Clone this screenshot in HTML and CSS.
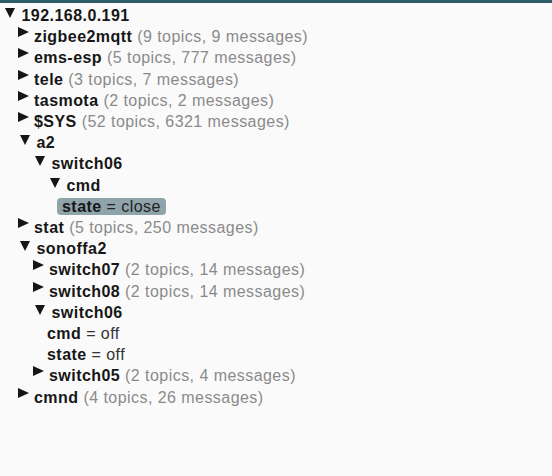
FILE: index.html
```html
<!DOCTYPE html>
<html lang="en">
<head>
  <meta charset="UTF-8">
  <title>MQTT Explorer</title>
  <link rel="stylesheet" href="styles.css">
</head>
<body>
  <div class="topbar"></div>

  <div class="tree">
    <div class="node open">
      <div class="row"><span class="tog"></span><b>192.168.0.191</b></div>
      <div class="kids">
        <div class="row"><span class="tog"></span><b>zigbee2mqtt</b> <span class="count">(9 topics, 9 messages)</span></div>
        <div class="row"><span class="tog"></span><b>ems-esp</b> <span class="count">(5 topics, 777 messages)</span></div>
        <div class="row"><span class="tog"></span><b>tele</b> <span class="count">(3 topics, 7 messages)</span></div>
        <div class="row"><span class="tog"></span><b>tasmota</b> <span class="count">(2 topics, 2 messages)</span></div>
        <div class="row"><span class="tog"></span><b>$SYS</b> <span class="count">(52 topics, 6321 messages)</span></div>

        <div class="node open">
          <div class="row"><span class="tog"></span><b>a2</b></div>
          <div class="kids">
            <div class="node open">
              <div class="row"><span class="tog"></span><b>switch06</b></div>
              <div class="kids">
                <div class="node open">
                  <div class="row"><span class="tog"></span><b>cmd</b></div>
                  <div class="kids">
                    <div class="row leaf"><span class="val selected"><b>state</b> = close</span></div>
                  </div>
                </div>
              </div>
            </div>
          </div>
        </div>

        <div class="row"><span class="tog"></span><b>stat</b> <span class="count">(5 topics, 250 messages)</span></div>

        <div class="node open">
          <div class="row"><span class="tog"></span><b>sonoffa2</b></div>
          <div class="kids">
            <div class="row"><span class="tog"></span><b>switch07</b> <span class="count">(2 topics, 14 messages)</span></div>
            <div class="row"><span class="tog"></span><b>switch08</b> <span class="count">(2 topics, 14 messages)</span></div>
            <div class="node open">
              <div class="row"><span class="tog"></span><b>switch06</b></div>
              <div class="kids">
                <div class="row leaf"><span class="val"><b>cmd</b> = off</span></div>
                <div class="row leaf"><span class="val"><b>state</b> = off</span></div>
              </div>
            </div>
            <div class="row"><span class="tog"></span><b>switch05</b> <span class="count">(2 topics, 4 messages)</span></div>
          </div>
        </div>

        <div class="row"><span class="tog"></span><b>cmnd</b> <span class="count">(4 topics, 26 messages)</span></div>
      </div>
    </div>
  </div>
</body>
</html>
```

FILE: styles.css
```css
html, body {
  margin: 0;
  background: #fafafa;
}
body {
  font-family: "Liberation Sans", Arial, sans-serif;
  font-size: 16px;
  letter-spacing: 0.45px;
  color: #222;
}
.topbar {
  height: 3px;
  background: #2e5d67;
}
.tree {
  padding: 2px 0 0 5px;
}
.row {
  line-height: 21.2px;
  white-space: nowrap;
}
.row b {
  font-weight: bold;
  color: #161616;
}
.count {
  color: #8a8a8a;
}
.kids {
  margin-left: 15px;
}
.tog {
  display: inline-block;
  width: 14px;
}
.tog::before {
  content: "";
  display: inline-block;
  width: 0;
  height: 0;
  margin-left: -2px;
  margin-bottom: 5px;
  border-left: 11px solid #161616;
  border-top: 5.5px solid transparent;
  border-bottom: 5.5px solid transparent;
}
.node.open > .row > .tog {
  width: 16.5px;
}
.node.open > .row > .tog::before {
  margin-left: 0;
  margin-bottom: 3px;
  border-left: 5.5px solid transparent;
  border-right: 5.5px solid transparent;
  border-top: 10.5px solid #161616;
  border-bottom: 0;
}
.leaf {
  margin-left: -8px;
}
.val {
  padding: 0 5px;
  color: #333;
  border-radius: 4px;
}
.val.selected {
  background: #8fa3ab;
  color: #222;
}
```
